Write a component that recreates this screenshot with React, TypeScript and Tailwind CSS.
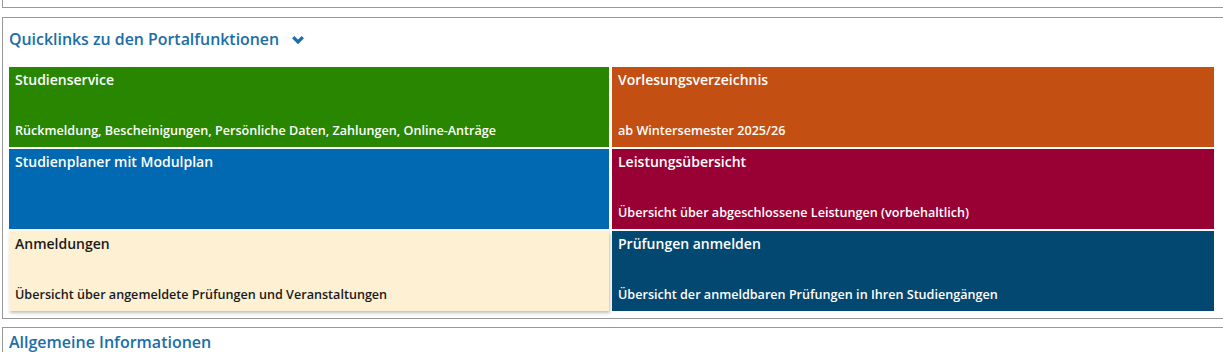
const tiles = [
  {
    title: 'Studienservice',
    text: 'Rückmeldung, Bescheinigungen, Persönliche Daten, Zahlungen, Online-Anträge',
    cls: 'bg-[#298600] text-white',
  },
  {
    title: 'Vorlesungsverzeichnis',
    text: 'ab Wintersemester 2025/26',
    cls: 'bg-[#c44f13] text-white',
  },
  {
    title: 'Studienplaner mit Modulplan',
    text: '',
    cls: 'bg-[#0069b2] text-white',
  },
  {
    title: 'Leistungsübersicht',
    text: 'Übersicht über abgeschlossene Leistungen (vorbehaltlich)',
    cls: 'bg-[#990033] text-white',
  },
  {
    title: 'Anmeldungen',
    text: 'Übersicht über angemeldete Prüfungen und Veranstaltungen',
    cls: 'bg-[#fdf0d3] text-[#1a1a1a] shadow-[1px_2px_3px_rgba(0,0,0,0.25)]',
  },
  {
    title: 'Prüfungen anmelden',
    text: 'Übersicht der anmeldbaren Prüfungen in Ihren Studiengängen',
    cls: 'bg-[#034870] text-white',
  },
];

export default function App() {
  return (
    <div className="w-[1223px] h-[352px] overflow-hidden bg-white font-['Open_Sans',sans-serif]">
      {/* previous portlet, cut off */}
      <div className="ml-[2px] w-[1240px] h-[8px] border-x border-b border-[#999]" />

      {/* Quicklinks */}
      <div className="ml-[2px] mt-[9px] w-[1240px] border border-[#999] pl-[6px] pb-[7px]">
        <div className="flex items-start h-[49px] pt-[10px]">
          <h2 className="text-[15.9px] font-semibold text-[#1a6ea9] leading-[22px]">
            Quicklinks zu den Portalfunktionen
          </h2>
          <svg className="ml-[13px] mt-[8px]" width="12" height="8" viewBox="0 0 12 8">
            <path d="M1.2 1.2 L6 6 L10.8 1.2" fill="none" stroke="#1a6ea9" strokeWidth="3.2" strokeLinejoin="miter" />
          </svg>
        </div>
        <div className="grid grid-cols-[600px_602px] gap-x-[3px] gap-y-[2px] w-[1205px]">
          {tiles.map((t) => (
            <a
              key={t.title}
              href="#"
              className={`flex flex-col justify-between h-[80px] px-[6px] pt-[3px] pb-[7px] ${t.cls}`}
            >
              <span className="text-[14px] font-semibold leading-[20px]">{t.title}</span>
              <span className="text-[12.6px] font-semibold leading-[18px]">{t.text}</span>
            </a>
          ))}
        </div>
      </div>

      {/* next portlet */}
      <div className="ml-[2px] mt-[8px] w-[1240px] border border-[#999] pl-[6px] pt-[3px]">
        <h2 className="text-[16px] font-semibold text-[#1a6ea9] leading-[22px]">Allgemeine Informationen</h2>
      </div>
    </div>
  );
}
